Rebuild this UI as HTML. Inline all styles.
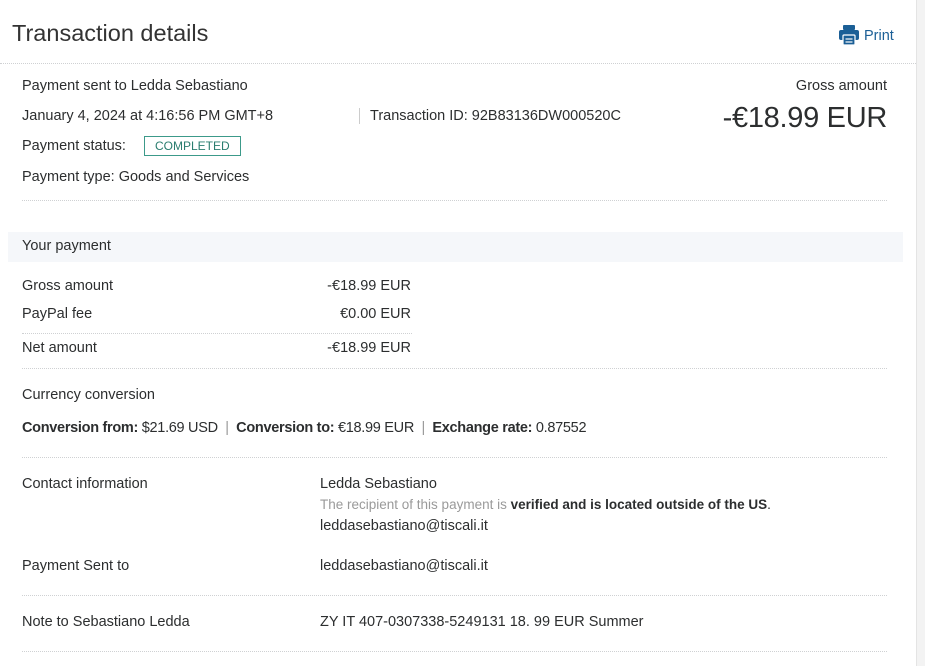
<!DOCTYPE html>
<html><head><meta charset="utf-8"><style>
body{margin:0;width:925px;height:666px;background:#fff;position:relative;overflow:hidden;font-family:"Liberation Sans",sans-serif;color:#2c2e2f;font-size:14.5px}
.a{position:absolute;white-space:nowrap;line-height:18px}
.l{position:absolute;height:0;border-top:1px dotted #cfd1d3}
.r{text-align:right}
b{font-weight:bold}
</style></head><body>
<div style="position:absolute;left:916px;top:0;width:1px;height:666px;background:#e4e4e4"></div>
<div style="position:absolute;left:917px;top:0;width:8px;height:666px;background:#f3f3f3"></div>
<div class="a" style="left:12px;top:18px;font-size:23.5px;line-height:30px;color:#333;font-weight:300">Transaction details</div>
<svg style="position:absolute;left:839px;top:25px" width="20" height="20" viewBox="0 0 20 20"><rect x="4" y="0" width="12" height="5" rx="1" fill="#1b5f96"/><rect x="0" y="5" width="20" height="10" rx="2" fill="#1b5f96"/><rect x="4" y="10" width="12" height="10" rx="1" fill="#1b5f96" stroke="#fff" stroke-width="1.2"/><line x1="6.5" y1="14" x2="13.5" y2="14" stroke="#fff" stroke-width="1.2"/><line x1="6.5" y1="17" x2="13.5" y2="17" stroke="#fff" stroke-width="1.2"/></svg>
<div class="a" style="left:864px;top:27px;color:#1b5f96;font-size:14.5px">Print</div>
<div class="l" style="left:0;width:916px;top:63px"></div>

<div class="a" style="left:22px;top:77px">Payment sent to Ledda Sebastiano</div>
<div class="a" style="left:22px;top:107px">January 4, 2024 at 4:16:56 PM GMT+8</div>
<div style="position:absolute;left:359px;top:108px;width:1px;height:16px;background:#ccc"></div>
<div class="a" style="left:370px;top:107px">Transaction ID: 92B83136DW000520C</div>
<div class="a" style="left:22px;top:137px">Payment status:</div>
<div class="a" style="left:144px;top:136px;border:1px solid #3c9a8a;color:#2a7d6f;font-size:12px;line-height:18px;padding:0 10px">COMPLETED</div>
<div class="a" style="left:22px;top:168px">Payment type: Goods and Services</div>
<div class="a r" style="right:38px;top:77px">Gross amount</div>
<div class="a r" style="right:38px;top:101px;font-size:29px;line-height:34px;letter-spacing:-0.3px">-€18.99 EUR</div>
<div class="l" style="left:22px;width:865px;top:200px"></div>

<div style="position:absolute;left:8px;top:232px;width:895px;height:30px;background:#f5f7fa"></div>
<div class="a" style="left:22px;top:237px">Your payment</div>
<div class="a" style="left:22px;top:277px">Gross amount</div>
<div class="a r" style="right:514px;top:277px">-€18.99 EUR</div>
<div class="a" style="left:22px;top:305px">PayPal fee</div>
<div class="a r" style="right:514px;top:305px">€0.00 EUR</div>
<div class="l" style="left:22px;width:390px;top:333px"></div>
<div class="a" style="left:22px;top:339px">Net amount</div>
<div class="a r" style="right:514px;top:339px">-€18.99 EUR</div>
<div class="l" style="left:22px;width:865px;top:368px"></div>
<div class="a" style="left:22px;top:386px">Currency conversion</div>
<div class="a" style="left:22px;top:419px;letter-spacing:-0.3px"><b>Conversion from:</b> $21.69 USD <span style="color:#999">&nbsp;|&nbsp;</span> <b>Conversion to:</b> €18.99 EUR <span style="color:#999">&nbsp;|&nbsp;</span> <b>Exchange rate:</b> 0.87552</div>
<div class="l" style="left:22px;width:865px;top:457px"></div>

<div class="a" style="left:22px;top:475px">Contact information</div>
<div class="a" style="left:320px;top:475px">Ledda Sebastiano</div>
<div class="a" style="left:320px;top:496px;font-size:13.5px"><span style="color:#9a9a9a">The recipient of this payment is </span><b>verified and is located outside of the US</b>.</div>
<div class="a" style="left:320px;top:517px">leddasebastiano@tiscali.it</div>
<div class="a" style="left:22px;top:557px">Payment Sent to</div>
<div class="a" style="left:320px;top:557px">leddasebastiano@tiscali.it</div>
<div class="l" style="left:22px;width:865px;top:595px"></div>
<div class="a" style="left:22px;top:613px">Note to Sebastiano Ledda</div>
<div class="a" style="left:320px;top:613px">ZY IT 407-0307338-5249131 18. 99 EUR Summer</div>
<div class="l" style="left:22px;width:865px;top:651px"></div>
</body></html>
